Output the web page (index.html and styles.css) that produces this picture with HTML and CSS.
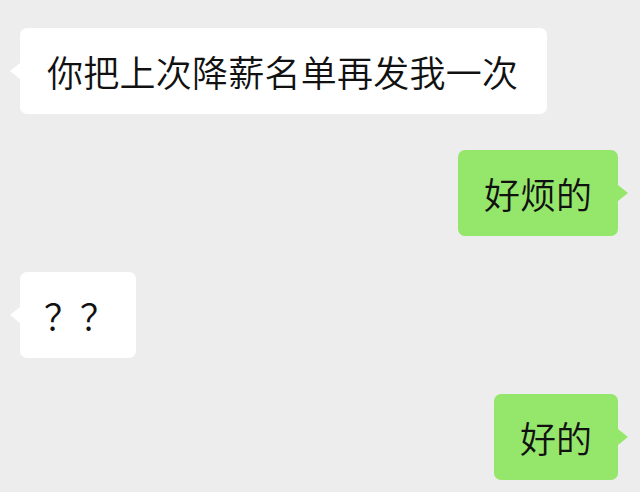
FILE: index.html
```html
<!DOCTYPE html>
<html lang="zh-CN">
<head>
<meta charset="utf-8">
<link rel="stylesheet" href="styles.css">
</head>
<body>
<div class="chat">
  <div class="row left"><div class="bubble white wide">你把上次降薪名单再发我一次</div></div>
  <div class="row right"><div class="bubble green">好烦的</div></div>
  <div class="row left"><div class="bubble white q">？？</div></div>
  <div class="row right"><div class="bubble green">好的</div></div>
</div>
</body>
</html>
```
FILE: styles.css
```css
html, body {
  margin: 0;
  padding: 0;
  background: #ededed;
}
body {
  width: 640px;
  height: 492px;
  overflow: hidden;
  font-family: "Noto Sans CJK SC", "Noto Sans", sans-serif;
}
.chat {
  display: flex;
  flex-direction: column;
  gap: 36px;
  padding: 28px 22px 0 20px;
}
.row {
  display: flex;
}
.row.left { justify-content: flex-start; }
.row.right { justify-content: flex-end; }
.bubble {
  position: relative;
  height: 86px;
  display: flex;
  align-items: center;
  padding: 0 26px;
  border-radius: 7px;
  font-size: 36px;
  font-weight: 350;
  color: #111111;
  white-space: nowrap;
}
.bubble.white { background: #ffffff; }
.bubble.green { background: #95e76c; }
.bubble.wide { padding: 0 29px 0 27px; letter-spacing: 0.25px; }
.bubble.q { padding: 0 20px 0 24px; }
.bubble::after {
  content: "";
  position: absolute;
  top: 50%;
  width: 0;
  height: 0;
  border-top: 8px solid transparent;
  border-bottom: 8px solid transparent;
  transform: translateY(-50%);
}
.left .bubble::after {
  left: -10px;
  border-right: 10px solid #ffffff;
}
.right .bubble::after {
  right: -10px;
  border-left: 10px solid #95e76c;
}
```
